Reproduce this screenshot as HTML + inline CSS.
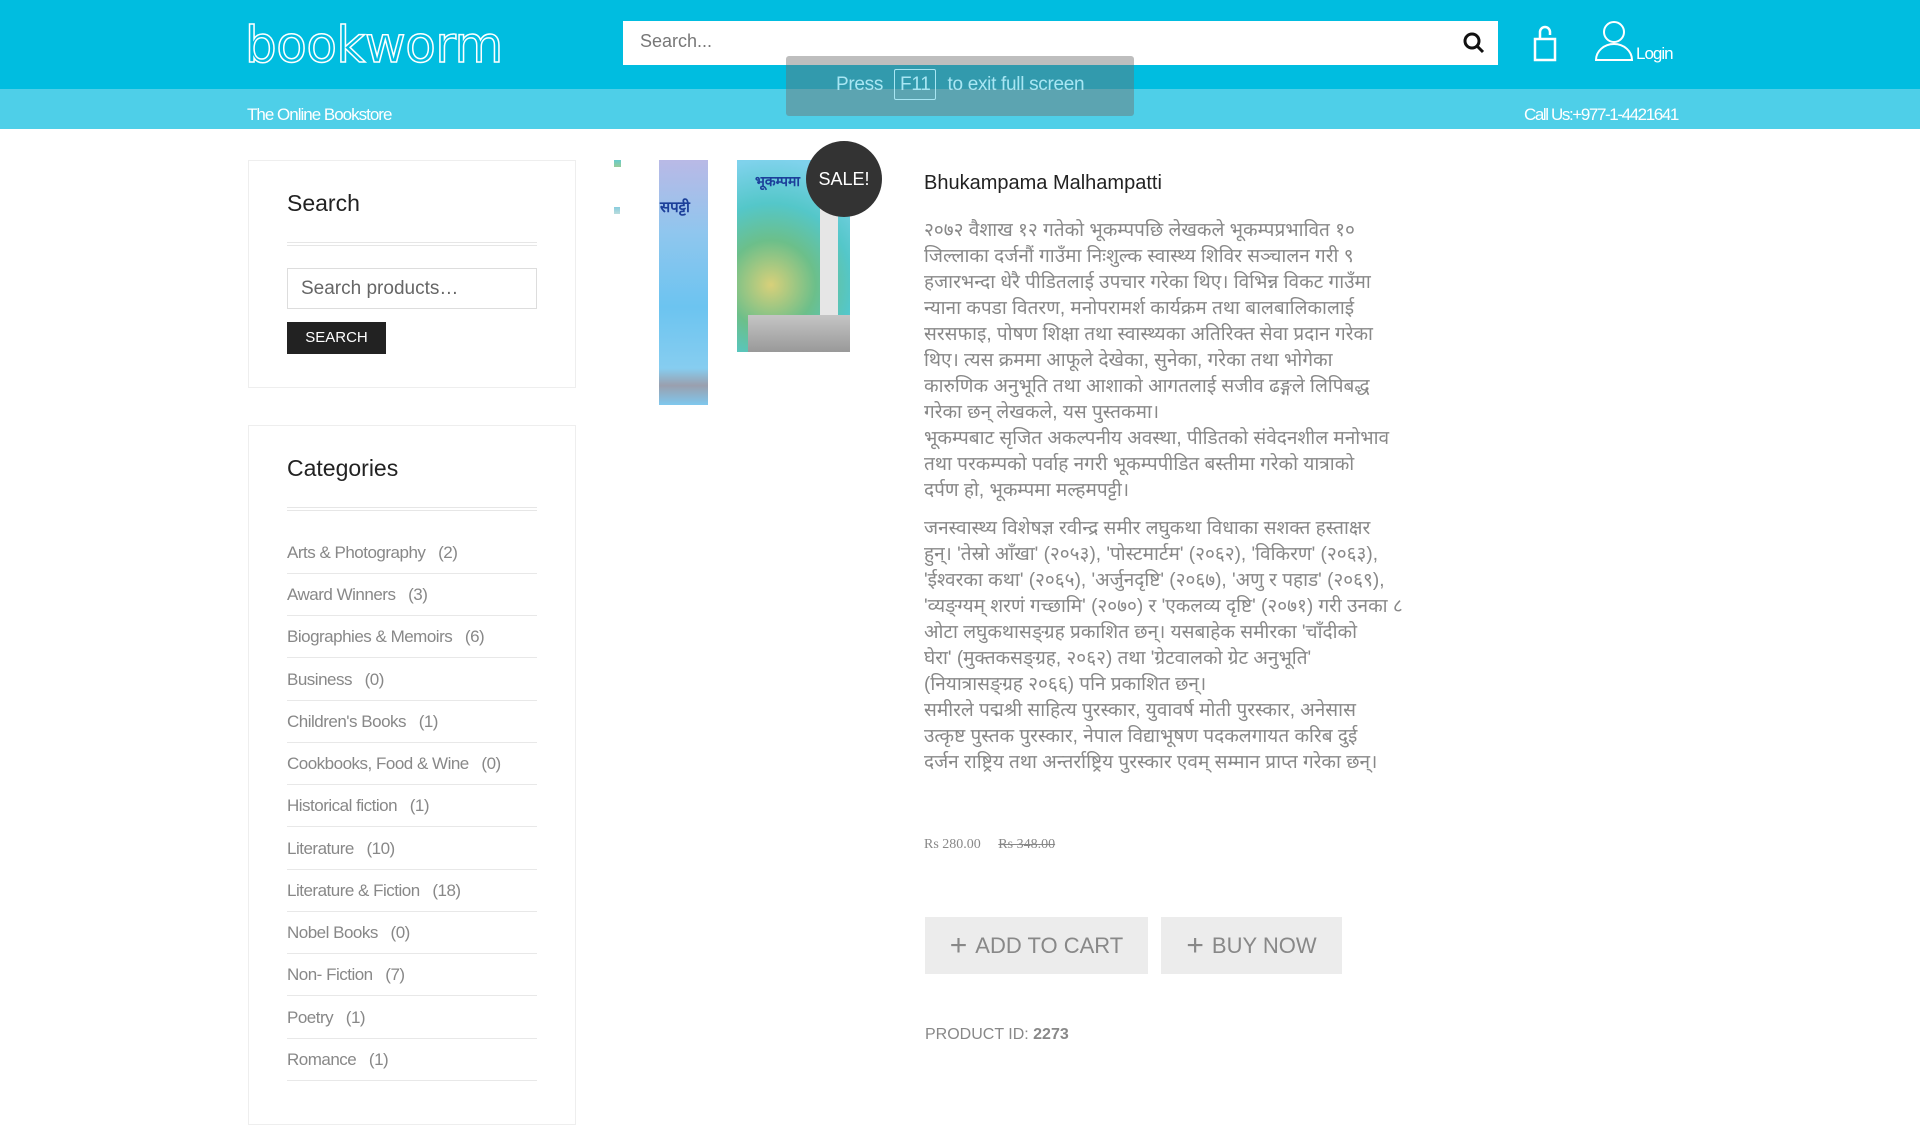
<!DOCTYPE html>
<html><head><meta charset="utf-8"><style>
*{margin:0;padding:0;box-sizing:border-box}
body{width:1920px;height:1080px;overflow:hidden;background:#fff;font-family:"Liberation Sans",sans-serif;position:relative}
.a{position:absolute}
.hdr{left:0;top:0;width:1920px;height:89px;background:#00bde0}
.band{left:0;top:89px;width:1920px;height:40px;background:#4ecfe8}
.logo{left:245px;top:16px;font-size:50px;letter-spacing:-0.5px;font-family:"DejaVu Sans","Liberation Sans",sans-serif;font-weight:normal;color:transparent;-webkit-text-stroke:1.5px #fff}
.box{border:1px solid #eee}
.cat{left:287px;width:250px;height:42px;border-bottom:1px solid #e8e8e8;font-size:17px;color:#888;line-height:42px;letter-spacing:-0.5px}
.desc{left:924px;font-size:19px;color:#888;line-height:26px;white-space:nowrap;font-family:"Liberation Sans","DejaVu Sans",sans-serif}
.btn{background:#ececec;color:#888;font-size:22px;line-height:57px;text-align:center}
</style></head><body>
<div class="a hdr"></div>
<div class="a band"></div>
<div class="a logo">bookworm</div>
<div class="a" style="left:623px;top:21px;width:875px;height:44px;background:#fff"></div>
<div class="a" style="left:640px;top:31px;font-size:18px;color:#777">Search...</div>
<svg class="a" style="left:1462px;top:31px" width="24" height="24" viewBox="0 0 24 24"><circle cx="10" cy="10" r="7" fill="none" stroke="#111" stroke-width="3"/><line x1="15" y1="15" x2="21" y2="21" stroke="#111" stroke-width="3"/></svg>
<svg class="a" style="left:1530px;top:24px" width="30" height="38" viewBox="0 0 30 38"><rect x="5" y="15" width="20" height="21" fill="none" stroke="#fff" stroke-width="2.5"/><path d="M10 15V8a5 5 0 0 1 10 0v3" fill="none" stroke="#fff" stroke-width="2.5"/></svg>
<svg class="a" style="left:1594px;top:20px" width="40" height="42" viewBox="0 0 40 42"><circle cx="20" cy="12" r="10" fill="none" stroke="#fff" stroke-width="2"/><path d="M2 40a18 16 0 0 1 36 0z" fill="none" stroke="#fff" stroke-width="2"/></svg>
<div class="a" style="left:1636px;top:44px;font-size:17px;color:#fff;letter-spacing:-1px">Login</div>
<div class="a" style="left:247px;top:105px;font-size:17px;color:#fff;letter-spacing:-1px">The Online Bookstore</div>
<div class="a" style="left:1524px;top:105px;font-size:17px;color:#fff;letter-spacing:-1.4px">Call Us:+977-1-4421641</div>
<div class="a" style="left:786px;top:56px;width:348px;height:60px;background:rgba(110,110,110,0.45);border-radius:3px"></div>
<div class="a" style="left:836px;top:74px;font-size:19px;color:#a8e6f3;letter-spacing:-0.3px">Press <span style="border:1px solid #a8e6f3;padding:4px 5px;border-radius:2px;margin:0 6px">F11</span> to exit full screen</div>

<div class="a box" style="left:248px;top:160px;width:328px;height:228px"></div>
<div class="a" style="left:287px;top:190px;font-size:23px;color:#222">Search</div>
<div class="a" style="left:287px;top:242px;width:250px;height:4px;border-top:1px solid #e6e6e6;border-bottom:1px solid #e6e6e6"></div>
<div class="a" style="left:287px;top:268px;width:250px;height:41px;border:1px solid #ddd;font-size:19px;color:#666;padding:9px 13px">Search products…</div>
<div class="a" style="left:287px;top:322px;width:99px;height:32px;background:#222;color:#fff;font-size:15px;text-align:center;line-height:32px">SEARCH</div>

<div class="a box" style="left:248px;top:425px;width:328px;height:700px"></div>
<div class="a" style="left:287px;top:455px;font-size:23px;color:#222">Categories</div>
<div class="a" style="left:287px;top:507px;width:250px;height:4px;border-top:1px solid #e6e6e6;border-bottom:1px solid #e6e6e6"></div>
<div class="a cat" style="top:532px">Arts &amp; Photography &nbsp;&nbsp;(2)</div>
<div class="a cat" style="top:574px">Award Winners &nbsp;&nbsp;(3)</div>
<div class="a cat" style="top:616px">Biographies &amp; Memoirs &nbsp;&nbsp;(6)</div>
<div class="a cat" style="top:659px">Business &nbsp;&nbsp;(0)</div>
<div class="a cat" style="top:701px">Children's Books &nbsp;&nbsp;(1)</div>
<div class="a cat" style="top:743px">Cookbooks, Food &amp; Wine &nbsp;&nbsp;(0)</div>
<div class="a cat" style="top:785px">Historical fiction &nbsp;&nbsp;(1)</div>
<div class="a cat" style="top:828px">Literature &nbsp;&nbsp;(10)</div>
<div class="a cat" style="top:870px">Literature &amp; Fiction &nbsp;&nbsp;(18)</div>
<div class="a cat" style="top:912px">Nobel Books &nbsp;&nbsp;(0)</div>
<div class="a cat" style="top:954px">Non- Fiction &nbsp;&nbsp;(7)</div>
<div class="a cat" style="top:997px">Poetry &nbsp;&nbsp;(1)</div>
<div class="a cat" style="top:1039px">Romance &nbsp;&nbsp;(1)</div>

<div class="a" style="left:614px;top:160px;width:7px;height:7px;background:linear-gradient(#6cc,#9c9)"></div>
<div class="a" style="left:614px;top:207px;width:6px;height:7px;background:linear-gradient(#8cd,#bdd)"></div>
<div class="a" style="left:659px;top:160px;width:49px;height:245px;background:linear-gradient(180deg,#b9b9e6 0%,#8fc6ee 30%,#6cc4f0 60%,#86cdf0 85%,#9a9fae 92%,#7fc8ee 100%)"></div>
<div class="a" style="left:660px;top:197px;font-size:15px;color:#1c3f9a;font-weight:bold">सपट्टी</div>
<div class="a" style="left:737px;top:160px;width:113px;height:192px;background:radial-gradient(circle at 30% 65%,#d8d07a 0,#6cbf8a 30%,#54c7c9 55%,#7fd2ec 85%)"></div>
<div class="a" style="left:820px;top:175px;width:18px;height:140px;background:#e6e6e6"></div>
<div class="a" style="left:748px;top:315px;width:102px;height:37px;background:linear-gradient(#c5c5c5,#999)"></div>
<div class="a" style="left:755px;top:172px;font-size:14px;color:#1c3f9a;font-weight:bold">भूकम्पमा</div>
<div class="a" style="left:806px;top:141px;width:76px;height:76px;border-radius:50%;background:#333;color:#fff;font-size:18px;text-align:center;line-height:76px">SALE!</div>

<div class="a" style="left:924px;top:172px;font-size:20px;color:#222">Bhukampama Malhampatti</div>
<div class="a desc" style="top:218px">२०७२ वैशाख १२ गतेको भूकम्पपछि लेखकले भूकम्पप्रभावित १०<br>जिल्लाका दर्जनौं गाउँमा निःशुल्क स्वास्थ्य शिविर सञ्चालन गरी ९<br>हजारभन्दा धेरै पीडितलाई उपचार गरेका थिए। विभिन्न विकट गाउँमा<br>न्याना कपडा वितरण, मनोपरामर्श कार्यक्रम तथा बालबालिकालाई<br>सरसफाइ, पोषण शिक्षा तथा स्वास्थ्यका अतिरिक्त सेवा प्रदान गरेका<br>थिए। त्यस क्रममा आफूले देखेका, सुनेका, गरेका तथा भोगेका<br>कारुणिक अनुभूति तथा आशाको आगतलाई सजीव ढङ्गले लिपिबद्ध<br>गरेका छन् लेखकले, यस पुस्तकमा।<br>भूकम्पबाट सृजित अकल्पनीय अवस्था, पीडितको संवेदनशील मनोभाव<br>तथा परकम्पको पर्वाह नगरी भूकम्पपीडित बस्तीमा गरेको यात्राको<br>दर्पण हो, भूकम्पमा मल्हमपट्टी।</div>
<div class="a desc" style="top:516px">जनस्वास्थ्य विशेषज्ञ रवीन्द्र समीर लघुकथा विधाका सशक्त हस्ताक्षर<br>हुन्। 'तेस्रो आँखा' (२०५३), 'पोस्टमार्टम' (२०६२), 'विकिरण' (२०६३),<br>'ईश्वरका कथा' (२०६५), 'अर्जुनदृष्टि' (२०६७), 'अणु र पहाड' (२०६९),<br>'व्यङ्ग्यम् शरणं गच्छामि' (२०७०) र 'एकलव्य दृष्टि' (२०७१) गरी उनका ८<br>ओटा लघुकथासङ्ग्रह प्रकाशित छन्। यसबाहेक समीरका 'चाँदीको<br>घेरा' (मुक्तकसङ्ग्रह, २०६२) तथा 'ग्रेटवालको ग्रेट अनुभूति'<br>(नियात्रासङ्ग्रह २०६६) पनि प्रकाशित छन्।<br>समीरले पद्मश्री साहित्य पुरस्कार, युवावर्ष मोती पुरस्कार, अनेसास<br>उत्कृष्ट पुस्तक पुरस्कार, नेपाल विद्याभूषण पदकलगायत करिब दुई<br>दर्जन राष्ट्रिय तथा अन्तर्राष्ट्रिय पुरस्कार एवम् सम्मान प्राप्त गरेका छन्।</div>
<div class="a" style="left:924px;top:837px;font-family:'Liberation Serif',serif;font-size:14px;color:#888">Rs 280.00 <span style="margin-left:14px;text-decoration:line-through">Rs 348.00</span></div>
<div class="a btn" style="left:925px;top:917px;width:223px;height:57px"><b style="font-weight:normal;font-size:30px;vertical-align:-2px;margin-right:8px">+</b>ADD TO CART</div>
<div class="a btn" style="left:1161px;top:917px;width:181px;height:57px"><b style="font-weight:normal;font-size:30px;vertical-align:-2px;margin-right:8px">+</b>BUY NOW</div>
<div class="a" style="left:925px;top:1026px;font-size:16px;color:#888">PRODUCT ID: <b>2273</b></div>
</body></html>
